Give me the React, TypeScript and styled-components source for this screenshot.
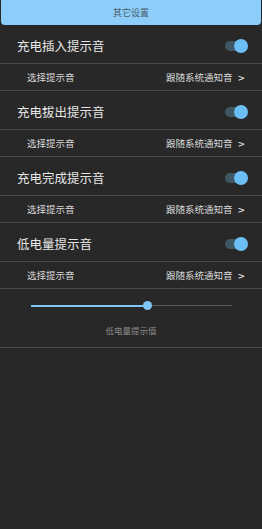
import React from 'react'
import styled, { createGlobalStyle } from 'styled-components'

const GlobalStyle = createGlobalStyle`
  html, body {
    margin: 0;
    padding: 0;
    background: #282828;
  }
  body {
    font-family: "Noto Sans CJK SC", "Noto Sans", sans-serif;
  }
`

const Page = styled.div`
  width: 262px;
  height: 529px;
  background: #282828;
  display: flex;
  flex-direction: column;
`

const Header = styled.div`
  height: 25px;
  margin: 0 1px;
  background: #8ccdf9;
  border-radius: 0 0 4px 4px;
  display: flex;
  align-items: center;
  justify-content: center;
  color: #4a5d6b;
  font-size: 9px;
`

const Group = styled.div`
  display: flex;
  flex-direction: column;
`

const MainRow = styled.div`
  height: 38px;
  box-sizing: border-box;
  padding: 3px 16px 0 17px;
  display: flex;
  align-items: center;
  justify-content: space-between;
  color: #e6e6e6;
  font-size: 12.5px;
`

const Divider = styled.div`
  height: 1px;
  background: #474747;
`

const SubRow = styled.div`
  height: 26px;
  display: flex;
  align-items: center;
  justify-content: space-between;
  padding: 0 17px 0 27px;
  color: #d8d8d8;
  font-size: 9.5px;
`

const Chevron = styled.span`
  margin-left: 5px;
  font-family: "DejaVu Sans", sans-serif;
  font-weight: bold;
  font-size: 9px;
`

const Track = styled.div`
  position: relative;
  width: 21px;
  height: 10px;
  border-radius: 5px;
  background: #3f5664;
`

const Thumb = styled.div`
  position: absolute;
  right: -2px;
  top: -2px;
  width: 14px;
  height: 14px;
  border-radius: 50%;
  background: #6cbff5;
`

const SliderBlock = styled.div`
  display: flex;
  flex-direction: column;
  align-items: center;
  padding-top: 16px;
  height: 58px;
  box-sizing: border-box;
`

const SliderTrack = styled.div`
  position: relative;
  width: 201px;
  height: 1px;
  background: #5a5a5a;
`

const SliderFill = styled.div`
  position: absolute;
  left: 0;
  top: -0.5px;
  height: 2px;
  background: #7ec6f5;
`

const SliderThumb = styled.div`
  position: absolute;
  top: -4px;
  width: 9px;
  height: 9px;
  margin-left: -4.5px;
  border-radius: 50%;
  background: #7ec6f5;
`

const SliderLabel = styled.div`
  margin-top: 18px;
  color: #8a8a8a;
  font-size: 8.5px;
`

const Toggle = () => (
  <Track>
    <Thumb />
  </Track>
)

const items = ['充电插入提示音', '充电拔出提示音', '充电完成提示音', '低电量提示音']

export default function App() {
  const value = 0.58
  return (
    <Page>
      <GlobalStyle />
      <Header>其它设置</Header>
      {items.map((title) => (
        <Group key={title}>
          <MainRow>
            <span>{title}</span>
            <Toggle />
          </MainRow>
          <Divider />
          <SubRow>
            <span>选择提示音</span>
            <span>
              跟随系统通知音<Chevron>&gt;</Chevron>
            </span>
          </SubRow>
          <Divider />
        </Group>
      ))}
      <SliderBlock>
        <SliderTrack>
          <SliderFill style={{ width: `${value * 100}%` }} />
          <SliderThumb style={{ left: `${value * 100}%` }} />
        </SliderTrack>
        <SliderLabel>低电量提示值</SliderLabel>
      </SliderBlock>
      <Divider />
    </Page>
  )
}
